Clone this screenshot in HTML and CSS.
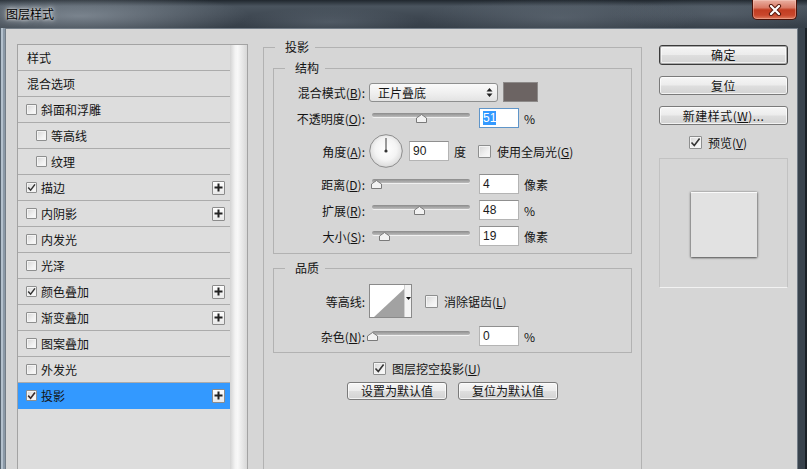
FILE: index.html
```html
<!DOCTYPE html>
<html lang="zh-CN">
<head>
<meta charset="utf-8">
<title>图层样式</title>
<link rel="stylesheet" href="styles.css">
</head>
<body>
<div class="window">
  <header class="titlebar">
    <span class="title">图层样式</span>
    <button class="close-btn" aria-label="关闭">
      <svg width="14" height="12" viewBox="0 0 14 12"><path d="M3 2 L11 10 M11 2 L3 10" stroke="#5a1a0e" stroke-width="4.2" stroke-linecap="round"/><path d="M3 2 L11 10 M11 2 L3 10" stroke="#ffffff" stroke-width="2.2" stroke-linecap="round"/></svg>
    </button>
  </header>
  <div class="frame">
    <div class="client">
      <aside class="sidebar">
        <div class="style-list">
          <ul class="rows">
            <li class="row">样式</li>
            <li class="row">混合选项</li>
            <li class="row cbrow"><span class="cb"></span>斜面和浮雕</li>
            <li class="row cbrow sub"><span class="cb"></span>等高线</li>
            <li class="row cbrow sub"><span class="cb"></span>纹理</li>
            <li class="row cbrow"><span class="cb"><svg width="9" height="9" viewBox="0 0 9 9"><path d="M1.2 4.6 L3.6 7.2 L8 1.4" fill="none" stroke="#333" stroke-width="1.5"/></svg></span>描边<span class="plus"><svg width="9" height="9" viewBox="0 0 9 9"><path d="M0.5 4.5 H8.5 M4.5 0.5 V8.5" stroke="#222" stroke-width="2"/></svg></span></li>
            <li class="row cbrow"><span class="cb"></span>内阴影<span class="plus"><svg width="9" height="9" viewBox="0 0 9 9"><path d="M0.5 4.5 H8.5 M4.5 0.5 V8.5" stroke="#222" stroke-width="2"/></svg></span></li>
            <li class="row cbrow"><span class="cb"></span>内发光</li>
            <li class="row cbrow"><span class="cb"></span>光泽</li>
            <li class="row cbrow"><span class="cb"><svg width="9" height="9" viewBox="0 0 9 9"><path d="M1.2 4.6 L3.6 7.2 L8 1.4" fill="none" stroke="#333" stroke-width="1.5"/></svg></span>颜色叠加<span class="plus"><svg width="9" height="9" viewBox="0 0 9 9"><path d="M0.5 4.5 H8.5 M4.5 0.5 V8.5" stroke="#222" stroke-width="2"/></svg></span></li>
            <li class="row cbrow"><span class="cb"></span>渐变叠加<span class="plus"><svg width="9" height="9" viewBox="0 0 9 9"><path d="M0.5 4.5 H8.5 M4.5 0.5 V8.5" stroke="#222" stroke-width="2"/></svg></span></li>
            <li class="row cbrow"><span class="cb"></span>图案叠加</li>
            <li class="row cbrow"><span class="cb"></span>外发光</li>
            <li class="row cbrow selected"><span class="cb"><svg width="9" height="9" viewBox="0 0 9 9"><path d="M1.2 4.6 L3.6 7.2 L8 1.4" fill="none" stroke="#3a2a2a" stroke-width="1.6"/></svg></span>投影<span class="plus"><svg width="9" height="9" viewBox="0 0 9 9"><path d="M0.5 4.5 H8.5 M4.5 0.5 V8.5" stroke="#222" stroke-width="2"/></svg></span></li>
          </ul>
          <div class="gutter"></div>
        </div>
      </aside>

      <main class="panel">
        <fieldset class="group outer">
          <legend class="legend-outer">投影</legend>
          <div class="outer-body">
            <fieldset class="group inner structure">
              <legend class="legend-inner">结构</legend>
              <div class="field">
                <span class="field-label">混合模式(<u>B</u>):</span>
                <div class="select"><span>正片叠底</span><svg width="7" height="11" viewBox="0 0 7 11"><path d="M3.5 1 L6.5 4.5 H0.5 Z M0.5 6.5 H6.5 L3.5 10 Z" fill="#222"/></svg></div>
                <span class="swatch"></span>
              </div>
              <div class="field">
                <span class="field-label">不透明度(<u>O</u>):</span>
                <div class="slider" style="--p:0.51"><span class="track"></span><svg class="thumb" width="11" height="9" viewBox="0 0 11 9"><path d="M5.5 0.5 L10.5 4 V8.5 H0.5 V4 Z" fill="#f2f2f2" stroke="#7a7a7a"/></svg></div>
                <span class="num focus"><span class="sel">51</span></span>
                <span class="unit">%</span>
              </div>
              <div class="field tall">
                <span class="field-label">角度(<u>A</u>):</span>
                <svg class="dial" width="34" height="34" viewBox="0 0 34 34">
                  <defs><radialGradient id="dg" cx="50%" cy="45%" r="55%"><stop offset="0" stop-color="#ffffff"/><stop offset="0.6" stop-color="#f4f4f4"/><stop offset="1" stop-color="#d9d9d9"/></radialGradient></defs>
                  <circle cx="17" cy="17" r="16.3" fill="url(#dg)" stroke="#8c8c8c"/>
                  <line x1="17" y1="17" x2="17" y2="4" stroke="#3a3a3a" stroke-width="1"/>
                  <circle cx="17" cy="17" r="1.6" fill="#333"/>
                </svg>
                <span class="num">90</span>
                <span class="unit">度</span>
                <span class="cb lg gap-cb"></span>
                <span class="cb-text">使用全局光(<u>G</u>)</span>
              </div>
              <div class="field">
                <span class="field-label">距离(<u>D</u>):</span>
                <div class="slider" style="--p:0.05"><span class="track"></span><svg class="thumb" width="11" height="9" viewBox="0 0 11 9"><path d="M5.5 0.5 L10.5 4 V8.5 H0.5 V4 Z" fill="#f2f2f2" stroke="#7a7a7a"/></svg></div>
                <span class="num">4</span>
                <span class="unit">像素</span>
              </div>
              <div class="field">
                <span class="field-label">扩展(<u>R</u>):</span>
                <div class="slider" style="--p:0.48"><span class="track"></span><svg class="thumb" width="11" height="9" viewBox="0 0 11 9"><path d="M5.5 0.5 L10.5 4 V8.5 H0.5 V4 Z" fill="#f2f2f2" stroke="#7a7a7a"/></svg></div>
                <span class="num">48</span>
                <span class="unit">%</span>
              </div>
              <div class="field">
                <span class="field-label">大小(<u>S</u>):</span>
                <div class="slider" style="--p:0.13"><span class="track"></span><svg class="thumb" width="11" height="9" viewBox="0 0 11 9"><path d="M5.5 0.5 L10.5 4 V8.5 H0.5 V4 Z" fill="#f2f2f2" stroke="#7a7a7a"/></svg></div>
                <span class="num">19</span>
                <span class="unit">像素</span>
              </div>
            </fieldset>

            <fieldset class="group inner quality">
              <legend class="legend-inner">品质</legend>
              <div class="field tall">
                <span class="field-label">等高线:</span>
                <div class="contour">
                  <svg class="curve" width="34" height="32" viewBox="0 0 34 32"><path d="M4 32 L34 4 V32 Z" fill="#a2a2a2"/></svg>
                  <span class="contour-arrow"><svg width="5" height="3" viewBox="0 0 5 3"><path d="M0 0 H5 L2.5 3 Z" fill="#111"/></svg></span>
                </div>
                <span class="cb lg aa-cb"></span>
                <span class="cb-text">消除锯齿(<u>L</u>)</span>
              </div>
              <div class="field">
                <span class="field-label">杂色(<u>N</u>):</span>
                <div class="slider" style="--p:0"><span class="track"></span><svg class="thumb" width="11" height="9" viewBox="0 0 11 9"><path d="M5.5 0.5 L10.5 4 V8.5 H0.5 V4 Z" fill="#f2f2f2" stroke="#7a7a7a"/></svg></div>
                <span class="num">0</span>
                <span class="unit">%</span>
              </div>
            </fieldset>

            <div class="knockout">
              <span class="cb lg"><svg width="11" height="11" viewBox="0 0 11 11"><path d="M1.5 5.5 L4.3 8.6 L9.6 1.6" fill="none" stroke="#333" stroke-width="1.6"/></svg></span>
              <span class="cb-text">图层挖空投影(<u>U</u>)</span>
            </div>
            <div class="defaults">
              <button class="btn small">设置为默认值</button>
              <button class="btn small">复位为默认值</button>
            </div>
          </div>
        </fieldset>
      </main>

      <aside class="actions">
        <button class="btn primary">确定</button>
        <button class="btn">复位</button>
        <button class="btn">新建样式(<u>W</u>)...</button>
        <div class="preview-check">
          <span class="cb lg"><svg width="11" height="11" viewBox="0 0 11 11"><path d="M1.5 5.5 L4.3 8.6 L9.6 1.6" fill="none" stroke="#333" stroke-width="1.6"/></svg></span>
          <span class="cb-text">预览(<u>V</u>)</span>
        </div>
        <div class="preview">
          <div class="preview-square"></div>
        </div>
      </aside>
    </div>
  </div>
</div>
</body>
</html>
```

FILE: styles.css
```css
* { box-sizing: border-box; }
html, body { margin: 0; padding: 0; }
body {
  width: 807px;
  height: 469px;
  overflow: hidden;
  background: #2d353d;
  font-family: "Noto Sans CJK SC", "Noto Sans", sans-serif;
  font-size: 12px;
  color: #141414;
}
u { text-decoration: underline; text-underline-offset: 1px; }

.window {
  width: 807px;
  height: 469px;
  display: flex;
  flex-direction: column;
}

/* ---------- title bar ---------- */
.titlebar {
  height: 28px;
  flex: none;
  display: flex;
  align-items: flex-start;
  background:
    radial-gradient(ellipse 170px 24px at 80px 16px, rgba(180, 190, 200, 0.5), transparent),
    radial-gradient(ellipse 140px 20px at 560px 18px, rgba(140, 152, 164, 0.3), transparent),
    radial-gradient(ellipse 90px 14px at 330px 22px, rgba(120, 132, 144, 0.35), transparent),
    radial-gradient(ellipse 110px 16px at 720px 14px, rgba(120, 132, 144, 0.3), transparent),
    linear-gradient(to bottom, #20272e 0, #4a545e 22%, #3d4650 65%, #363f48 100%);
}
.title {
  margin: 5px 0 0 6px;
  line-height: 17px;
  color: #000;
  text-shadow: 0 0 6px rgba(255, 255, 255, 0.95), 0 0 3px rgba(255, 255, 255, 0.9);
}
.close-btn {
  margin-left: auto;
  margin-right: 10px;
  width: 45px;
  height: 20px;
  padding: 0;
  border: 1px solid #4a1209;
  border-top: none;
  border-radius: 0 0 5px 5px;
  background: linear-gradient(to bottom, #eab0a2 0, #d97a66 40%, #c23d22 52%, #c9472c 80%, #de7b5e 100%);
  box-shadow: inset 0 0 0 1px rgba(255, 220, 210, 0.35);
  display: flex;
  align-items: center;
  justify-content: center;
}

/* ---------- frame & client ---------- */
.frame {
  flex: 1;
  display: flex;
  padding: 0 9px 0 5px;
  background:
    linear-gradient(to right, #56636f 0 1px, #b4c1cd 1px 3px, #8b99a7 3px 5px, transparent 5px),
    linear-gradient(to left, #1b2127 0 2px, #39434d 2px 9px, transparent 9px),
    #2d353d;
}
.client {
  flex: 1;
  display: flex;
  background: #d6d6d6;
  border: 1px solid #737d87;
  border-bottom: none;
}

/* ---------- style list ---------- */
.sidebar {
  padding: 15px 0 0 11px;
  display: flex;
  flex-direction: column;
}
.style-list {
  flex: 1;
  width: 231px;
  display: flex;
  border: 1px solid #a3a3a3;
  border-bottom: none;
  background: #dddddd;
}
.rows {
  width: 212px;
  margin: 0;
  padding: 0;
  list-style: none;
}
.row {
  height: 26px;
  display: flex;
  align-items: center;
  padding: 0 5px 0 9px;
  border-bottom: 1px solid #ababab;
  white-space: nowrap;
}
.row.cbrow { padding-left: 8px; }
.row.sub { padding-left: 18px; }
.row.selected {
  background: #3399ff;
  border-bottom-color: #3399ff;
}
.gutter {
  width: 17px;
  background: linear-gradient(to right, #d3d3d3 0, #f3f3f3 30%, #f8f8f8 45%, #e6e6e6 75%, #d7d7d7 100%);
}

.cb {
  flex: none;
  width: 11px;
  height: 11px;
  margin-right: 4px;
  border: 1px solid #8e8f8f;
  border-radius: 1px;
  background: linear-gradient(135deg, #d6d6d6 0, #f1f1f1 60%, #fbfbfb 100%);
  box-shadow: inset 0 0 0 1px #f4f4f4;
  display: flex;
  align-items: center;
  justify-content: center;
}
.cb.lg {
  width: 13px;
  height: 13px;
  margin-right: 6px;
}
.plus {
  flex: none;
  margin-left: auto;
  width: 13px;
  height: 14px;
  border: 1px solid #8c8c8c;
  border-radius: 1px;
  background: linear-gradient(to bottom, #fdfdfd, #e8e8e8);
  display: flex;
  align-items: center;
  justify-content: center;
}

/* ---------- main panel ---------- */
.panel {
  margin-left: 15px;
  width: 379px;
  display: flex;
  flex-direction: column;
}
.group {
  margin: 0;
  padding: 0;
  min-width: 0;
  border: 1px solid #b2b2b2;
}
.group legend {
  line-height: 16px;
  padding: 0 6px 0 10px;
}
.outer {
  flex: 1;
  margin-top: 10px;
  padding: 5px 9px 0;
  border-bottom: none;
}
.legend-outer { margin-left: 2px; }
.legend-inner { margin-left: 11px; }
.outer-body {
  display: flex;
  flex-direction: column;
}
.inner { width: 359px; }
.structure {
  padding: 6px 0 7px;
  display: flex;
  flex-direction: column;
  gap: 6px;
}
.quality {
  margin-top: 6px;
  padding: 8px 0 6px;
  display: flex;
  flex-direction: column;
  gap: 8px;
}

.field {
  height: 20px;
  display: flex;
  align-items: center;
  white-space: nowrap;
}
.field.tall { height: 34px; }
.field-label {
  width: 91px;
  margin-right: 4px;
  text-align: right;
}

.select {
  width: 129px;
  height: 19px;
  margin-right: 5px;
  padding: 0 4px 0 8px;
  border: 1px solid #8e8f8f;
  border-radius: 3px;
  background: linear-gradient(to bottom, #fafafa 0, #f0f0f0 50%, #e3e3e3 100%);
  display: flex;
  align-items: center;
  justify-content: space-between;
  line-height: 17px;
}
.swatch {
  width: 35px;
  height: 20px;
  background: #6c6463;
  border: 1px solid #8d8a89;
}

.slider {
  position: relative;
  width: 101px;
  height: 20px;
  margin-right: 9px;
}
.track {
  display: block;
  margin: 5px 0 0 3px;
  height: 4px;
  border-radius: 2px;
  background: linear-gradient(to bottom, #8b8b8b, #bcbcbc);
  box-shadow: 0 1px 0 #f0f0f0;
}
.thumb {
  position: absolute;
  top: 6px;
  left: calc(3px + 98px * var(--p) - 5.5px);
}

.num {
  width: 40px;
  height: 20px;
  padding-left: 3px;
  border: 1px solid #b4b4b4;
  border-top-color: #8f8f8f;
  background: #fff;
  font-family: "Liberation Sans", Arial, sans-serif;
  font-size: 12px;
  line-height: 18px;
  color: #1a1a1a;
}
.num.focus { border-color: #5f95c9; }
.sel {
  background: #3399ff;
  color: #fff;
}
.unit { margin-left: 5px; }

.dial { margin-right: 6px; flex: none; }
.gap-cb { margin-left: 12px; }

.contour {
  width: 43px;
  height: 34px;
  display: flex;
  border: 1px solid #8a8a8a;
  background: #fff;
}
.curve { display: block; }
.contour-arrow {
  flex: 1;
  border-left: 1px solid #d0d0d0;
  background: #f4f4f4;
  display: flex;
  justify-content: center;
  padding-top: 12px;
}
.aa-cb { margin-left: 13px; }

.knockout {
  margin: 7px 0 0 100px;
  height: 16px;
  display: flex;
  align-items: center;
}
.defaults {
  margin-top: 6px;
  display: flex;
  justify-content: center;
  gap: 11px;
}

/* ---------- buttons ---------- */
.btn {
  padding: 0;
  font-family: "Noto Sans CJK SC", "Noto Sans", sans-serif;
  font-size: 12px;
  color: #141414;
  line-height: 16px;
  border: 1px solid #7a7a7a;
  border-radius: 3px;
  background: linear-gradient(to bottom, #f6f6f6 0, #ececec 48%, #dedede 52%, #d3d3d3 100%);
  box-shadow: inset 0 0 0 1px rgba(255, 255, 255, 0.7);
}
.btn.small {
  width: 100px;
  height: 18px;
}

/* ---------- right column ---------- */
.actions {
  margin-left: 17px;
  width: 129px;
  padding-top: 16px;
  display: flex;
  flex-direction: column;
}
.actions .btn {
  height: 19px;
  margin-top: 11px;
  letter-spacing: 0.5px;
}
.actions .btn.primary {
  height: 20px;
  margin-top: 0;
  border: 1px solid #3a3a3a;
  box-shadow: inset 0 0 0 1px #a9a9a9, inset 0 0 0 2px rgba(255, 255, 255, 0.6);
}
.preview-check {
  margin-top: 10px;
  height: 14px;
  display: flex;
  align-items: center;
  padding-left: 30px;
}
.preview {
  margin-top: 9px;
  height: 130px;
  border: 1px solid #c2c2c2;
  border-bottom-color: #f2f2f2;
  background: #d6d6d6;
  display: flex;
  align-items: center;
  justify-content: center;
}
.preview-square {
  width: 66px;
  height: 65px;
  margin-top: 2px;
  background: #e2e2e2;
  border-top: 1px solid #fafafa;
  box-shadow: 0 1px 2px rgba(0, 0, 0, 0.55), 1px 0 2px rgba(0, 0, 0, 0.2), -1px 0 2px rgba(0, 0, 0, 0.2);
}
```
